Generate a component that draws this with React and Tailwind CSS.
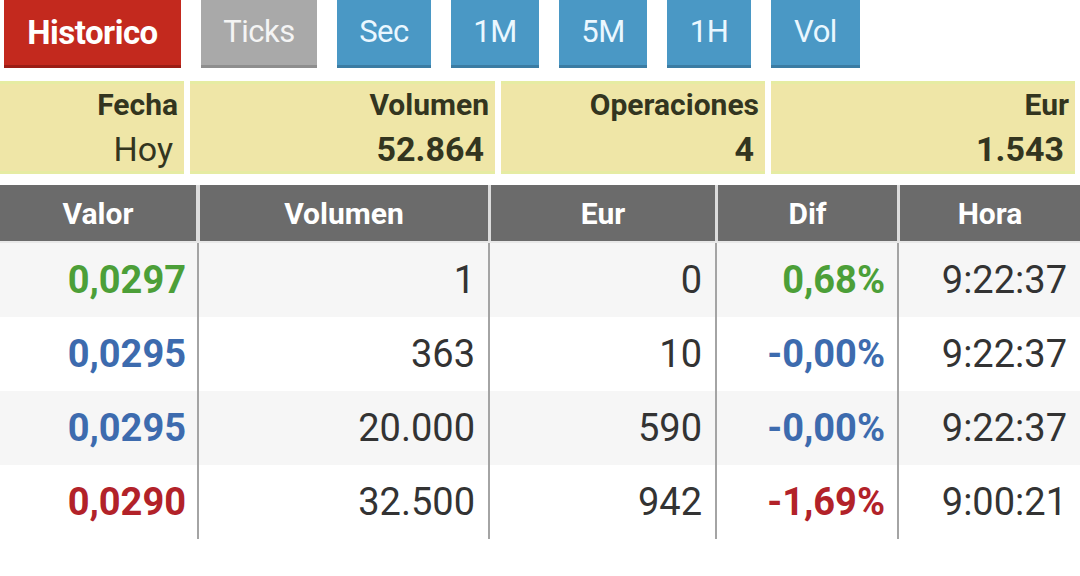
import React from 'react';

const tabs = [
  { label: 'Historico', w: 'w-[177px]', cls: 'bg-[#c3291e] border-[#9b1d15] text-white font-bold text-[33px] tracking-[-0.5px]' },
  { label: 'Ticks', w: 'w-[116px]', cls: 'bg-[#a9a9a9] border-[#8e8e8e] text-[#f4f4f4] text-[31px] tracking-[-0.5px]' },
  { label: 'Sec', w: 'w-[94px]', cls: 'bg-[#4a98c5] border-[#3b7ca3] text-[#eaf7ff] text-[31px] tracking-[-0.5px]' },
  { label: '1M', w: 'w-[88px]', cls: 'bg-[#4a98c5] border-[#3b7ca3] text-[#eaf7ff] text-[31px] tracking-[-0.5px]' },
  { label: '5M', w: 'w-[88px]', cls: 'bg-[#4a98c5] border-[#3b7ca3] text-[#eaf7ff] text-[31px] tracking-[-0.5px]' },
  { label: '1H', w: 'w-[84px]', cls: 'bg-[#4a98c5] border-[#3b7ca3] text-[#eaf7ff] text-[31px] tracking-[-0.5px]' },
  { label: 'Vol', w: 'w-[89px]', cls: 'bg-[#4a98c5] border-[#3b7ca3] text-[#eaf7ff] text-[31px] tracking-[-0.5px]' },
];

const summary = [
  { label: 'Fecha', value: 'Hoy', bold: false, w: 'w-[184px]' },
  { label: 'Volumen', value: '52.864', bold: true, w: 'w-[305px]' },
  { label: 'Operaciones', value: '4', bold: true, w: 'w-[264px]' },
  { label: 'Eur', value: '1.543', bold: true, w: 'w-[304px]' },
];

const colors = {
  up: 'text-[#4c9f38]',
  flat: 'text-[#3d6bae]',
  down: 'text-[#b22229]',
};

const rows = [
  { valor: '0,0297', vol: '1', eur: '0', dif: '0,68%', hora: '9:22:37', trend: 'up' },
  { valor: '0,0295', vol: '363', eur: '10', dif: '-0,00%', hora: '9:22:37', trend: 'flat' },
  { valor: '0,0295', vol: '20.000', eur: '590', dif: '-0,00%', hora: '9:22:37', trend: 'flat' },
  { valor: '0,0290', vol: '32.500', eur: '942', dif: '-1,69%', hora: '9:00:21', trend: 'down' },
];

const cols = 'grid grid-cols-[197px_291px_227px_182px_183px]';

export default function App() {
  return (
    <div className="w-[1080px] h-[576px] bg-white overflow-hidden font-['Roboto','Liberation_Sans',sans-serif]">
      {/* period tabs */}
      <div className="flex gap-[20px] pl-[4px]">
        {tabs.map(t => (
          <div
            key={t.label}
            className={`h-[68px] border-b-[3px] flex items-center justify-center ${t.w} ${t.cls}`}
          >
            {t.label}
          </div>
        ))}
      </div>

      {/* summary band */}
      <div className="flex gap-[6px] mt-[13px] text-[#33351f]">
        {summary.map(s => (
          <div
            key={s.label}
            className={`h-[93px] bg-[#efe6a7] border-y-[3px] border-[#e6eca3] flex flex-col items-end pr-[6px] ${s.w}`}
          >
            <div className="text-[30px] font-bold leading-[44px] -mt-[1px]">{s.label}</div>
            <div className={`text-[34px] leading-[44px] pr-[5px] ${s.bold ? 'font-bold' : ''}`}>{s.value}</div>
          </div>
        ))}
      </div>

      {/* ticks table */}
      <div className={`${cols} mt-[11px] h-[58px] bg-[#dcdcdc] border-b-[2px] border-[#e8e8e8]`}>
        {['Valor', 'Volumen', 'Eur', 'Dif', 'Hora'].map((h, i) => (
          <div
            key={h}
            className={`bg-[#6b6b6b] text-white font-bold text-[30px] flex items-center justify-center ${i > 0 ? 'ml-[3px]' : 'mr-[1px]'}`}
          >
            {h}
          </div>
        ))}
      </div>

      {rows.map((r, i) => (
        <div key={i} className={`${cols} h-[74px] text-[38px] text-[#333333] ${i % 2 === 0 ? 'bg-[#f6f6f6]' : 'bg-white'}`}>
          <div className={`flex items-center justify-end pr-[11px] font-bold ${colors[r.trend]}`}>{r.valor}</div>
          <div className="flex items-center justify-end pr-[13px] border-l-[2px] border-[#a4a4a4]">{r.vol}</div>
          <div className="flex items-center justify-end pr-[13px] border-l-[2px] border-[#a4a4a4]">{r.eur}</div>
          <div className={`flex items-center justify-end pr-[12px] font-bold border-l-[2px] border-[#a4a4a4] ${colors[r.trend]}`}>{r.dif}</div>
          <div className="flex items-center justify-end pr-[13px] border-l-[2px] border-[#a4a4a4]">{r.hora}</div>
        </div>
      ))}
    </div>
  );
}
